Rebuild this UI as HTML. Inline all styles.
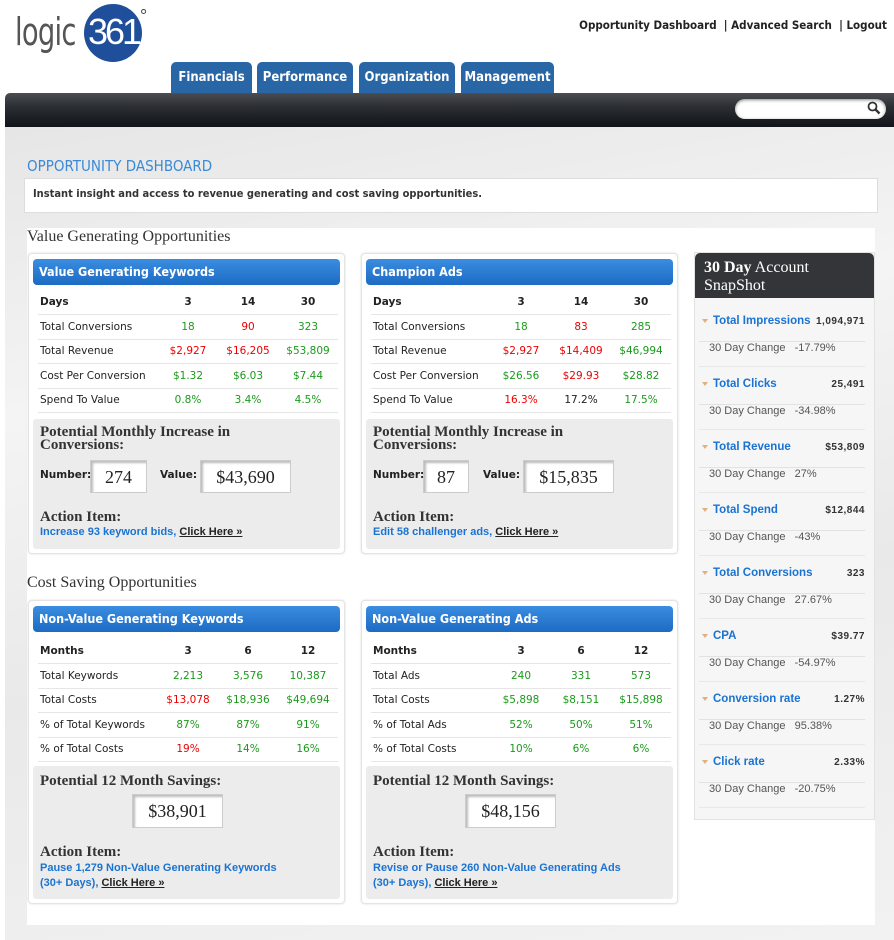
<!DOCTYPE html>
<html><head><meta charset="utf-8"><style>
*{margin:0;padding:0;box-sizing:border-box}
body{width:894px;height:940px;background:#fff;position:relative;overflow:hidden;font-family:"Liberation Sans",sans-serif}
.a{position:absolute}
.top{right:7px;top:18px;font:bold 11.5px "DejaVu Sans Condensed","Liberation Sans",sans-serif;color:#222}
.tab{top:62px;height:32px;background:#2866a6;border-radius:5px 5px 0 0;color:#fff;font:bold 13px "DejaVu Sans Condensed","Liberation Sans",sans-serif;text-align:center;line-height:32px}
.bar{left:5px;top:93px;width:889px;height:34px;background:linear-gradient(#4a4d52,#2b2e33 40%,#111418);border-radius:5px 0 0 0}
.bg{left:5px;top:127px;width:889px;height:813px;background:linear-gradient(170deg,#e6e6e6,#f4f4f4 30%,#e9e9e9 60%,#f2f2f2)}
.card{background:#fff;border:1px solid #e4e4e4;border-radius:4px;box-shadow:0 0 2px #ddd}
.hd{position:absolute;left:4px;top:5px;right:4px;height:26px;border-radius:4px;background:linear-gradient(#3a8de0,#1d6bc4);color:#fff;font:bold 12.5px "DejaVu Sans Condensed","Liberation Sans",sans-serif;line-height:26px;padding-left:6px}
table{position:absolute;left:9px;width:300px;border-collapse:collapse;font:10.5px "DejaVu Sans","Liberation Sans",sans-serif;color:#222}
td{height:24.5px;border-bottom:1px solid #e6e6e6;text-align:center;width:60px}
td:first-child{text-align:left;width:120px;padding-left:2px}
tr:first-child td{font-weight:bold}
.g{color:#1a9a1a}.r{color:#e00}
.gb{position:absolute;left:4px;right:4px;background:#ececec;border-radius:3px}
.ser{font-family:"Liberation Serif",serif;font-weight:bold;color:#333}
.box{position:absolute;background:#fff;border:1px solid #ccc;box-shadow:inset 2px 2px 2px #bbb;font:18px "Liberation Serif",serif;color:#222;text-align:center}
.lk{font:bold 11px "Liberation Sans",sans-serif;color:#1a73d2}
.lk u{color:#222}
.lbl{font:bold 10.5px "DejaVu Sans","Liberation Sans",sans-serif;color:#222}
.si{position:absolute;left:4px;width:166px;font:bold 11.5px "Liberation Sans",sans-serif}
.si .t{color:#1a73d2;padding-left:14px;position:relative}
.si .t:before{content:"";position:absolute;left:3px;top:4px;border:3px solid transparent;border-top:4px solid #e0b080}
.si .v{position:absolute;right:0;top:1px;color:#333;font:bold 10px "Liberation Sans",sans-serif;letter-spacing:.5px}
.si .c{margin-top:14px;border-top:1px solid #e2e2e2;border-bottom:1px solid #e8e8e8;height:26px;line-height:24px;font:11px "Liberation Sans",sans-serif;color:#555;padding-left:10px}
</style></head><body>
<div class="a" style="left:15px;top:10px;font:38px 'DejaVu Sans','Liberation Sans',sans-serif;color:#555;letter-spacing:-1px;transform:scaleX(.72);transform-origin:left;line-height:44px">logic</div>
<div class="a" style="left:84px;top:4px;width:58px;height:58px;border-radius:50%;background:#1f4f9a"></div>
<div class="a" style="left:88px;top:11px;font:36px 'Liberation Sans Narrow','Liberation Sans',sans-serif;color:#fff;letter-spacing:-3px">361</div>
<div class="a" style="left:140px;top:6px;font:18px 'Liberation Sans',sans-serif;color:#444">°</div>
<div class="a top">Opportunity Dashboard &nbsp;| Advanced Search &nbsp;| Logout</div>
<div class="a tab" style="left:171px;width:81px">Financials</div>
<div class="a tab" style="left:257px;width:96px">Performance</div>
<div class="a tab" style="left:359px;width:96px">Organization</div>
<div class="a tab" style="left:461px;width:93px">Management</div>
<div class="a bar"></div>
<div class="a" style="left:735px;top:99px;width:151px;height:20px;background:#fff;border-radius:10px;box-shadow:inset 0 1px 3px #888"></div>
<svg class="a" style="left:867px;top:101px" width="14" height="14" viewBox="0 0 14 14"><circle cx="5.5" cy="5.5" r="4" fill="none" stroke="#333" stroke-width="1.8"/><path d="M8.5 8.5L12.5 12.5" stroke="#333" stroke-width="2.4"/></svg>
<div class="a bg"></div>
<div class="a" style="left:27px;top:157px;font:15px 'DejaVu Sans Condensed','Liberation Sans',sans-serif;color:#3a8ad6">OPPORTUNITY DASHBOARD</div>
<div class="a" style="left:24px;top:178px;width:854px;height:35px;background:#fff;border:1px solid #ddd;font:bold 11px 'DejaVu Sans Condensed','Liberation Sans',sans-serif;color:#333;padding:8px 0 0 8px">Instant insight and access to revenue generating and cost saving opportunities.</div>
<div class="a" style="left:27px;top:228px;width:848px;height:697px;background:#fff"></div>
<div class="a" style="left:27px;top:228px;font:16px 'Liberation Serif',serif;color:#333">Value Generating Opportunities</div>
<div class="a" style="left:27px;top:574px;font:16px 'Liberation Serif',serif;color:#333">Cost Saving Opportunities</div>

<div class="a card" style="left:28px;top:253px;width:317px;height:301px">
<div class="hd">Value Generating Keywords</div>
<table style="top:36px"><tr><td>Days</td><td>3</td><td>14</td><td>30</td></tr>
<tr><td>Total Conversions</td><td class="g">18</td><td class="r">90</td><td class="g">323</td></tr>
<tr><td>Total Revenue</td><td class="r">$2,927</td><td class="r">$16,205</td><td class="g">$53,809</td></tr>
<tr><td>Cost Per Conversion</td><td class="g">$1.32</td><td class="g">$6.03</td><td class="g">$7.44</td></tr>
<tr><td>Spend To Value</td><td class="g">0.8%</td><td class="g">3.4%</td><td class="g">4.5%</td></tr></table>
<div class="gb" style="top:165px;height:130px">
<div class="a ser" style="left:7px;top:7px;font-size:15px;line-height:13px">Potential Monthly Increase in<br>Conversions:</div>
<div class="a lbl" style="left:7px;top:50px">Number:</div>
<div class="box" style="left:57px;top:41px;width:57px;height:33px;line-height:32px">274</div>
<div class="a lbl" style="left:127px;top:50px">Value:</div>
<div class="box" style="left:167px;top:41px;width:91px;height:33px;line-height:32px">$43,690</div>
<div class="a ser" style="left:7px;top:90px;font-size:15px">Action Item:</div>
<div class="a lk" style="left:7px;top:107px">Increase 93 keyword bids, <u>Click Here »</u></div>
</div></div>

<div class="a card" style="left:361px;top:253px;width:317px;height:301px">
<div class="hd">Champion Ads</div>
<table style="top:36px"><tr><td>Days</td><td>3</td><td>14</td><td>30</td></tr>
<tr><td>Total Conversions</td><td class="g">18</td><td class="r">83</td><td class="g">285</td></tr>
<tr><td>Total Revenue</td><td class="r">$2,927</td><td class="r">$14,409</td><td class="g">$46,994</td></tr>
<tr><td>Cost Per Conversion</td><td class="g">$26.56</td><td class="r">$29.93</td><td class="g">$28.82</td></tr>
<tr><td>Spend To Value</td><td class="r">16.3%</td><td>17.2%</td><td class="g">17.5%</td></tr></table>
<div class="gb" style="top:165px;height:130px">
<div class="a ser" style="left:7px;top:7px;font-size:15px;line-height:13px">Potential Monthly Increase in<br>Conversions:</div>
<div class="a lbl" style="left:7px;top:50px">Number:</div>
<div class="box" style="left:57px;top:41px;width:46px;height:33px;line-height:32px">87</div>
<div class="a lbl" style="left:117px;top:50px">Value:</div>
<div class="box" style="left:157px;top:41px;width:91px;height:33px;line-height:32px">$15,835</div>
<div class="a ser" style="left:7px;top:90px;font-size:15px">Action Item:</div>
<div class="a lk" style="left:7px;top:107px">Edit 58 challenger ads, <u>Click Here »</u></div>
</div></div>

<div class="a card" style="left:28px;top:600px;width:317px;height:304px">
<div class="hd">Non-Value Generating Keywords</div>
<table style="top:38px"><tr><td>Months</td><td>3</td><td>6</td><td>12</td></tr>
<tr><td>Total Keywords</td><td class="g">2,213</td><td class="g">3,576</td><td class="g">10,387</td></tr>
<tr><td>Total Costs</td><td class="r">$13,078</td><td class="g">$18,936</td><td class="g">$49,694</td></tr>
<tr><td>% of Total Keywords</td><td class="g">87%</td><td class="g">87%</td><td class="g">91%</td></tr>
<tr><td>% of Total Costs</td><td class="r">19%</td><td class="g">14%</td><td class="g">16%</td></tr></table>
<div class="gb" style="top:165px;height:133px">
<div class="a ser" style="left:7px;top:7px;font-size:15px">Potential 12 Month Savings:</div>
<div class="box" style="left:99px;top:28px;width:91px;height:34px;line-height:33px">$38,901</div>
<div class="a ser" style="left:7px;top:78px;font-size:15px">Action Item:</div>
<div class="a lk" style="left:7px;top:95px;line-height:15px">Pause 1,279 Non-Value Generating Keywords<br>(30+ Days), <u>Click Here »</u></div>
</div></div>

<div class="a card" style="left:361px;top:600px;width:317px;height:304px">
<div class="hd">Non-Value Generating Ads</div>
<table style="top:38px"><tr><td>Months</td><td>3</td><td>6</td><td>12</td></tr>
<tr><td>Total Ads</td><td class="g">240</td><td class="g">331</td><td class="g">573</td></tr>
<tr><td>Total Costs</td><td class="g">$5,898</td><td class="g">$8,151</td><td class="g">$15,898</td></tr>
<tr><td>% of Total Ads</td><td class="g">52%</td><td class="g">50%</td><td class="g">51%</td></tr>
<tr><td>% of Total Costs</td><td class="g">10%</td><td class="g">6%</td><td class="g">6%</td></tr></table>
<div class="gb" style="top:165px;height:133px">
<div class="a ser" style="left:7px;top:7px;font-size:15px">Potential 12 Month Savings:</div>
<div class="box" style="left:99px;top:28px;width:91px;height:34px;line-height:33px">$48,156</div>
<div class="a ser" style="left:7px;top:78px;font-size:15px">Action Item:</div>
<div class="a lk" style="left:7px;top:95px;line-height:15px">Revise or Pause 260 Non-Value Generating Ads<br>(30+ Days), <u>Click Here »</u></div>
</div></div>

<div class="a" style="left:694px;top:252px;width:181px;height:568px;background:#f6f6f6;border:1px solid #e2e2e2">
<div style="height:45px;background:#333538;border-radius:5px 5px 0 0;color:#fff;font:16px 'Liberation Serif',serif;padding:6px 0 0 9px;line-height:18px"><b>30 Day</b> Account<br>SnapShot</div>
<div class="si" style="top:62px"><div class="t">Total Impressions</div><div class="v">1,094,971</div><div class="c">30 Day Change &nbsp; -17.79%</div></div>
<div class="si" style="top:125px"><div class="t">Total Clicks</div><div class="v">25,491</div><div class="c">30 Day Change &nbsp; -34.98%</div></div>
<div class="si" style="top:188px"><div class="t">Total Revenue</div><div class="v">$53,809</div><div class="c">30 Day Change &nbsp; 27%</div></div>
<div class="si" style="top:251px"><div class="t">Total Spend</div><div class="v">$12,844</div><div class="c">30 Day Change &nbsp; -43%</div></div>
<div class="si" style="top:314px"><div class="t">Total Conversions</div><div class="v">323</div><div class="c">30 Day Change &nbsp; 27.67%</div></div>
<div class="si" style="top:377px"><div class="t">CPA</div><div class="v">$39.77</div><div class="c">30 Day Change &nbsp; -54.97%</div></div>
<div class="si" style="top:440px"><div class="t">Conversion rate</div><div class="v">1.27%</div><div class="c">30 Day Change &nbsp; 95.38%</div></div>
<div class="si" style="top:503px"><div class="t">Click rate</div><div class="v">2.33%</div><div class="c">30 Day Change &nbsp; -20.75%</div></div>
</div>
</body></html>
